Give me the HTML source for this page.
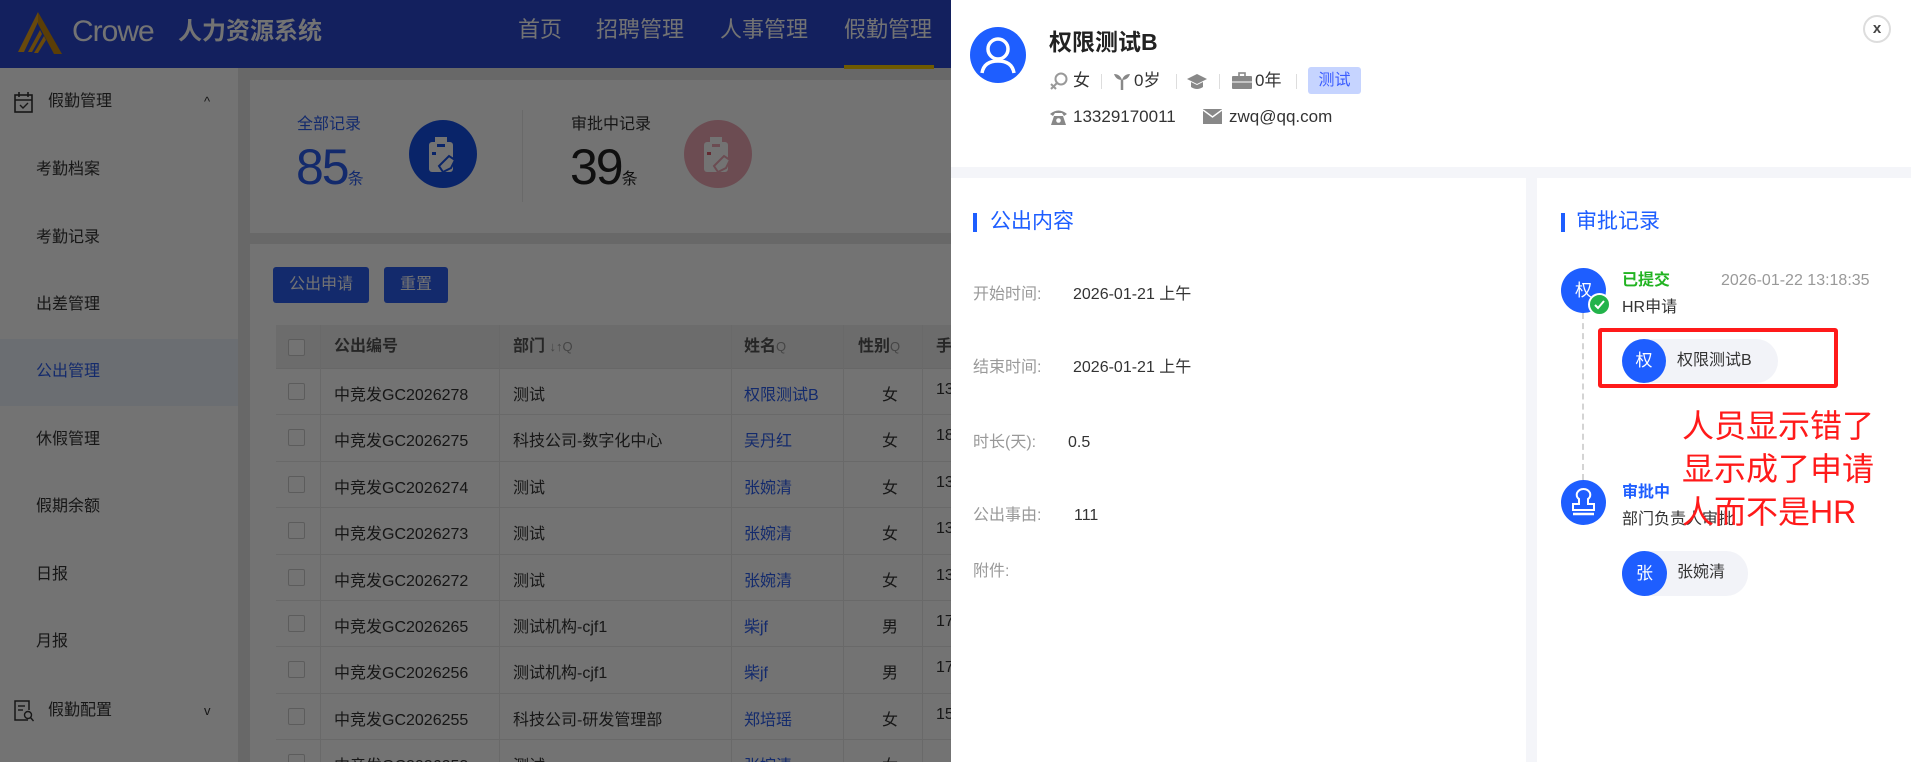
<!DOCTYPE html>
<html><head><meta charset="utf-8"><style>
*{margin:0;padding:0;box-sizing:border-box}
html,body{width:1911px;height:762px;overflow:hidden}
body{position:relative;background:#e6e6e6;font-family:"Liberation Sans","Noto Sans CJK SC",sans-serif;color:#333}
#wrap{position:absolute;left:0;top:0;width:1911px;height:762px;overflow:hidden}
.a{position:absolute;white-space:nowrap}
.c{position:absolute;white-space:nowrap;line-height:20px;transform:translateY(-50%)}
</style></head><body><div id="wrap">
<!-- header -->
<div class="a" style="left:0;top:0;width:1911px;height:68px;background:#2a48d0"></div>
<svg class="a" style="left:14px;top:12px" width="48" height="42" viewBox="0 0 48 42"><path d="M24 0 L4 40 L10 40 L24 10 Z" fill="#e8a21c"/><path d="M24 0 L48 42 L40 42 L24 12Z" fill="#c98a10"/><path d="M14 40 L26 18 L28 22 L18 40Z" fill="#e8a21c"/><path d="M20 41 L30 24 L32 28 L24 41Z" fill="#e8a21c"/></svg>
<div class="c" style="left:72px;top:32px;font-size:30px;color:#fff;line-height:34px;letter-spacing:-1px">Crowe</div>
<div class="c" style="left:178px;top:32px;font-size:24px;color:#fff;font-weight:bold;line-height:30px">人力资源系统</div>
<div class="c" style="left:518px;top:30px;font-size:22px;color:#fff;line-height:28px">首页</div>
<div class="c" style="left:596px;top:30px;font-size:22px;color:#fff;line-height:28px">招聘管理</div>
<div class="c" style="left:720px;top:30px;font-size:22px;color:#fff;line-height:28px">人事管理</div>
<div class="c" style="left:844px;top:30px;font-size:22px;color:#fff;line-height:28px">假勤管理</div>
<div class="a" style="left:844px;top:65px;width:90px;height:4px;background:#f5c800"></div>
<!-- sidebar -->
<div class="a" style="left:0;top:68px;width:238px;height:694px;background:#fff"></div>
<div class="a" style="left:0;top:339px;width:238px;height:67px;background:#eef3fc"></div>
<svg class="a" style="left:14px;top:92px" width="20" height="22" viewBox="0 0 20 22"><rect x="1" y="3" width="17" height="17" fill="none" stroke="#333" stroke-width="1.6"/><line x1="1" y1="8" x2="18" y2="8" stroke="#333" stroke-width="1.6"/><line x1="5" y1="0" x2="5" y2="5" stroke="#333" stroke-width="1.6"/><line x1="14" y1="0" x2="14" y2="5" stroke="#333" stroke-width="1.6"/><path d="M6 13 L9 16 L14 11" fill="none" stroke="#333" stroke-width="1.4"/></svg>
<div class="c" style="left:48px;top:102px;font-size:16px">假勤管理</div>
<div class="c" style="left:204px;top:102px;font-size:13px">^</div>
<div class="c" style="left:36px;top:170px;font-size:16px">考勤档案</div>
<div class="c" style="left:36px;top:238px;font-size:16px">考勤记录</div>
<div class="c" style="left:36px;top:305px;font-size:16px">出差管理</div>
<div class="c" style="left:36px;top:372px;font-size:16px;color:#2c5ef0">公出管理</div>
<div class="c" style="left:36px;top:440px;font-size:16px">休假管理</div>
<div class="c" style="left:36px;top:507px;font-size:16px">假期余额</div>
<div class="c" style="left:36px;top:575px;font-size:16px">日报</div>
<div class="c" style="left:36px;top:642px;font-size:16px">月报</div>
<svg class="a" style="left:14px;top:700px" width="20" height="22" viewBox="0 0 20 22"><path d="M14 20 H1 V1 H15 V10" fill="none" stroke="#333" stroke-width="1.5"/><line x1="4" y1="6" x2="11" y2="6" stroke="#333" stroke-width="1.4"/><line x1="4" y1="10" x2="9" y2="10" stroke="#333" stroke-width="1.4"/><circle cx="14" cy="15" r="3.5" fill="none" stroke="#333" stroke-width="1.4"/><line x1="16.5" y1="17.5" x2="19.5" y2="21" stroke="#333" stroke-width="1.4"/></svg>
<div class="c" style="left:48px;top:711px;font-size:16px">假勤配置</div>
<div class="c" style="left:204px;top:711px;font-size:13px">v</div>
<!-- stats card -->
<div class="a" style="left:250px;top:80px;width:701px;height:153px;background:#fff"></div>
<div class="c" style="left:297px;top:125px;font-size:16px;color:#2c5ef0">全部记录</div>
<div class="a" style="left:296px;top:142px;font-size:50px;line-height:50px;color:#2c5ef0;letter-spacing:-2px">85<span style="font-size:16px;letter-spacing:0">条</span></div>
<svg class="a" style="left:409px;top:120px" width="68" height="68" viewBox="0 0 68 68"><circle cx="34" cy="34" r="34" fill="#1550e8"/><rect x="20" y="22" width="24" height="30" rx="3" fill="#fff"/><rect x="26" y="17" width="12" height="6" fill="#fff"/><rect x="28" y="24" width="8" height="3" fill="#1550e8"/><rect x="23" y="32" width="4" height="3" fill="#1550e8"/><path d="M30 46 L40 36 L46 40 L42 48 L34 52Z" fill="#fff" stroke="#1550e8" stroke-width="2"/></svg>
<div class="a" style="left:522px;top:110px;width:1px;height:92px;background:#e8e8e8"></div>
<div class="c" style="left:571px;top:125px;font-size:16px;color:#333">审批中记录</div>
<div class="a" style="left:570px;top:142px;font-size:50px;line-height:50px;color:#222;letter-spacing:-2px">39<span style="font-size:16px;letter-spacing:0">条</span></div>
<svg class="a" style="left:684px;top:120px" width="68" height="68" viewBox="0 0 68 68"><circle cx="34" cy="34" r="34" fill="#f0a8b6"/><rect x="20" y="22" width="24" height="30" rx="3" fill="#fff"/><rect x="26" y="17" width="12" height="6" fill="#fff"/><rect x="28" y="24" width="8" height="3" fill="#f0a8b6"/><rect x="23" y="32" width="4" height="3" fill="#e06070"/><path d="M30 46 L40 36 L46 40 L42 48 L34 52Z" fill="#fff" stroke="#f0a8b6" stroke-width="2"/></svg>
<!-- table card -->
<div class="a" style="left:250px;top:244px;width:701px;height:518px;background:#fff"></div>
<div class="a" style="left:273px;top:267px;width:96px;height:36px;background:#2c5ef0;border-radius:3px;color:#fff;font-size:16px;line-height:36px;text-align:center">公出申请</div>
<div class="a" style="left:384px;top:267px;width:64px;height:36px;background:#2c5ef0;border-radius:3px;color:#fff;font-size:16px;line-height:36px;text-align:center">重置</div>
<div class="a" style="left:276px;top:325px;width:675px;height:44px;background:#f0f0f0;border-bottom:1px solid #e4e4e4"></div>
<div class="a" style="left:320px;top:325px;width:1px;height:437px;background:#e8e8e8"></div>
<div class="a" style="left:499px;top:325px;width:1px;height:437px;background:#e8e8e8"></div>
<div class="a" style="left:731px;top:325px;width:1px;height:437px;background:#e8e8e8"></div>
<div class="a" style="left:843px;top:325px;width:1px;height:437px;background:#e8e8e8"></div>
<div class="a" style="left:922px;top:325px;width:1px;height:437px;background:#e8e8e8"></div>
<div class="a" style="left:288px;top:339px;width:17px;height:17px;border:1px solid #ccc;background:#fff;border-radius:2px"></div>
<div class="c" style="left:334px;top:347px;font-size:16px;color:#555;font-weight:bold">公出编号</div>
<div class="c" style="left:513px;top:347px;font-size:16px;color:#555;font-weight:bold">部门 <span style="font-weight:normal;font-size:13px;color:#999">↓↑Q</span></div>
<div class="c" style="left:744px;top:347px;font-size:16px;color:#555;font-weight:bold">姓名<span style="font-weight:normal;font-size:13px;color:#999">Q</span></div>
<div class="c" style="left:858px;top:347px;font-size:16px;color:#555;font-weight:bold">性别<span style="font-weight:normal;font-size:13px;color:#999">Q</span></div>
<div class="c" style="left:936px;top:347px;font-size:16px;color:#555;font-weight:bold">手</div>

<div class="a" style="left:276px;top:369px;width:675px;height:393px;overflow:hidden">
<div style="position:relative;height:46.4px;border-bottom:1px solid #e8e8e8"><div class="a" style="left:12px;top:14px;width:17px;height:17px;border:1px solid #ccc;border-radius:2px"></div><span class="a" style="left:58px;top:12px;font-size:16px">中竞发GC2026278</span><span class="a" style="left:237px;top:12px;font-size:16px">测试</span><span class="a" style="left:468px;top:12px;font-size:16px;color:#2c5ef0">权限测试B</span><span class="a" style="left:606px;top:12px;font-size:16px">女</span><span class="a" style="left:660px;top:12px;font-size:16px">13</span></div>
<div style="position:relative;height:46.4px;border-bottom:1px solid #e8e8e8"><div class="a" style="left:12px;top:14px;width:17px;height:17px;border:1px solid #ccc;border-radius:2px"></div><span class="a" style="left:58px;top:12px;font-size:16px">中竞发GC2026275</span><span class="a" style="left:237px;top:12px;font-size:16px">科技公司-数字化中心</span><span class="a" style="left:468px;top:12px;font-size:16px;color:#2c5ef0">吴丹红</span><span class="a" style="left:606px;top:12px;font-size:16px">女</span><span class="a" style="left:660px;top:12px;font-size:16px">18</span></div>
<div style="position:relative;height:46.4px;border-bottom:1px solid #e8e8e8"><div class="a" style="left:12px;top:14px;width:17px;height:17px;border:1px solid #ccc;border-radius:2px"></div><span class="a" style="left:58px;top:12px;font-size:16px">中竞发GC2026274</span><span class="a" style="left:237px;top:12px;font-size:16px">测试</span><span class="a" style="left:468px;top:12px;font-size:16px;color:#2c5ef0">张婉清</span><span class="a" style="left:606px;top:12px;font-size:16px">女</span><span class="a" style="left:660px;top:12px;font-size:16px">13</span></div>
<div style="position:relative;height:46.4px;border-bottom:1px solid #e8e8e8"><div class="a" style="left:12px;top:14px;width:17px;height:17px;border:1px solid #ccc;border-radius:2px"></div><span class="a" style="left:58px;top:12px;font-size:16px">中竞发GC2026273</span><span class="a" style="left:237px;top:12px;font-size:16px">测试</span><span class="a" style="left:468px;top:12px;font-size:16px;color:#2c5ef0">张婉清</span><span class="a" style="left:606px;top:12px;font-size:16px">女</span><span class="a" style="left:660px;top:12px;font-size:16px">13</span></div>
<div style="position:relative;height:46.4px;border-bottom:1px solid #e8e8e8"><div class="a" style="left:12px;top:14px;width:17px;height:17px;border:1px solid #ccc;border-radius:2px"></div><span class="a" style="left:58px;top:12px;font-size:16px">中竞发GC2026272</span><span class="a" style="left:237px;top:12px;font-size:16px">测试</span><span class="a" style="left:468px;top:12px;font-size:16px;color:#2c5ef0">张婉清</span><span class="a" style="left:606px;top:12px;font-size:16px">女</span><span class="a" style="left:660px;top:12px;font-size:16px">13</span></div>
<div style="position:relative;height:46.4px;border-bottom:1px solid #e8e8e8"><div class="a" style="left:12px;top:14px;width:17px;height:17px;border:1px solid #ccc;border-radius:2px"></div><span class="a" style="left:58px;top:12px;font-size:16px">中竞发GC2026265</span><span class="a" style="left:237px;top:12px;font-size:16px">测试机构-cjf1</span><span class="a" style="left:468px;top:12px;font-size:16px;color:#2c5ef0">柴jf</span><span class="a" style="left:606px;top:12px;font-size:16px">男</span><span class="a" style="left:660px;top:12px;font-size:16px">17</span></div>
<div style="position:relative;height:46.4px;border-bottom:1px solid #e8e8e8"><div class="a" style="left:12px;top:14px;width:17px;height:17px;border:1px solid #ccc;border-radius:2px"></div><span class="a" style="left:58px;top:12px;font-size:16px">中竞发GC2026256</span><span class="a" style="left:237px;top:12px;font-size:16px">测试机构-cjf1</span><span class="a" style="left:468px;top:12px;font-size:16px;color:#2c5ef0">柴jf</span><span class="a" style="left:606px;top:12px;font-size:16px">男</span><span class="a" style="left:660px;top:12px;font-size:16px">17</span></div>
<div style="position:relative;height:46.4px;border-bottom:1px solid #e8e8e8"><div class="a" style="left:12px;top:14px;width:17px;height:17px;border:1px solid #ccc;border-radius:2px"></div><span class="a" style="left:58px;top:12px;font-size:16px">中竞发GC2026255</span><span class="a" style="left:237px;top:12px;font-size:16px">科技公司-研发管理部</span><span class="a" style="left:468px;top:12px;font-size:16px;color:#2c5ef0">郑培瑶</span><span class="a" style="left:606px;top:12px;font-size:16px">女</span><span class="a" style="left:660px;top:12px;font-size:16px">15</span></div>
<div style="position:relative;height:46.4px"><div class="a" style="left:12px;top:14px;width:17px;height:17px;border:1px solid #ccc;border-radius:2px"></div><span class="a" style="left:58px;top:12px;font-size:16px">中竞发GC2026253</span><span class="a" style="left:237px;top:12px;font-size:16px">测试</span><span class="a" style="left:468px;top:12px;font-size:16px;color:#2c5ef0">张婉清</span><span class="a" style="left:606px;top:12px;font-size:16px">女</span></div>
</div>
<!-- overlay -->
<div class="a" style="left:0;top:0;width:951px;height:762px;background:rgba(0,0,0,.55)"></div>

<!-- drawer -->
<div class="a" style="left:951px;top:0;width:960px;height:762px;background:#f4f5f9"></div>
<div class="a" style="left:951px;top:0;width:960px;height:167px;background:#fff"></div>
<div class="a" style="left:951px;top:178px;width:575px;height:584px;background:#fff"></div>
<div class="a" style="left:1537px;top:178px;width:374px;height:584px;background:#fff"></div>
<svg class="a" style="left:970px;top:27px" width="56" height="56" viewBox="0 0 56 56"><circle cx="28" cy="28" r="28" fill="#1e5eff"/><circle cx="28" cy="22" r="10" fill="none" stroke="#fff" stroke-width="3.5"/><path d="M12 46 Q14 34 28 34 Q42 34 44 46" fill="none" stroke="#fff" stroke-width="3.5"/></svg>
<div class="c" style="left:1049px;top:42px;font-size:23px;font-weight:bold;color:#222;line-height:28px">权限测试B</div>
<svg class="a" style="left:1049px;top:71px" width="20" height="20" viewBox="0 0 20 20"><circle cx="12" cy="8" r="5.5" fill="none" stroke="#999" stroke-width="2"/><line x1="8" y1="12" x2="2" y2="18" stroke="#999" stroke-width="2"/><line x1="2" y1="13" x2="7" y2="18" stroke="#999" stroke-width="2"/></svg>
<div class="c" style="left:1073px;top:81px;font-size:17px">女</div>
<div class="a" style="left:1101px;top:74px;width:1px;height:15px;background:#ddd"></div>
<svg class="a" style="left:1113px;top:72px" width="18" height="18" viewBox="0 0 18 18"><path d="M9 18 V8" stroke="#888" stroke-width="2.5"/><path d="M9 8 Q3 8 1 2 Q7 2 9 8 Q11 2 17 2 Q15 8 9 8Z" fill="#888"/></svg>
<div class="c" style="left:1134px;top:81px;font-size:17px">0岁</div>
<div class="a" style="left:1176px;top:74px;width:1px;height:15px;background:#ddd"></div>
<svg class="a" style="left:1187px;top:73px" width="20" height="17" viewBox="0 0 20 17"><path d="M0 6 L10 1 L20 6 L10 11Z" fill="#888"/><path d="M4 9 V14 Q10 18 16 14 V9 L10 12Z" fill="#888"/></svg>
<div class="a" style="left:1219px;top:74px;width:1px;height:15px;background:#ddd"></div>
<svg class="a" style="left:1232px;top:72px" width="20" height="18" viewBox="0 0 20 18"><rect x="0" y="4" width="20" height="13" rx="1" fill="#888"/><rect x="7" y="1" width="6" height="4" fill="none" stroke="#888" stroke-width="1.6"/><line x1="0" y1="10" x2="20" y2="10" stroke="#fff" stroke-width="1"/></svg>
<div class="c" style="left:1255px;top:81px;font-size:17px">0年</div>
<div class="a" style="left:1296px;top:74px;width:1px;height:15px;background:#ddd"></div>
<div class="a" style="left:1308px;top:67px;width:53px;height:27px;background:#c6d4ff;border-radius:3px;color:#3a5cff;font-size:16px;line-height:27px;text-align:center">测试</div>
<svg class="a" style="left:1049px;top:108px" width="19" height="18" viewBox="0 0 19 18"><path d="M1 6 Q9.5 -1 18 6 L15 8 L13 5 H6 L4 8Z" fill="#888"/><path d="M5 8 H14 L17 17 H2Z" fill="#888"/><circle cx="9.5" cy="12.5" r="2.3" fill="#fff"/></svg>
<div class="c" style="left:1073px;top:117px;font-size:17px">13329170011</div>
<svg class="a" style="left:1203px;top:109px" width="19" height="15" viewBox="0 0 19 15"><rect x="0" y="0" width="19" height="15" fill="#888"/><path d="M0 1 L9.5 8 L19 1" fill="none" stroke="#fff" stroke-width="1.5"/></svg>
<div class="c" style="left:1229px;top:117px;font-size:17px">zwq@qq.com</div>
<div class="a" style="left:1863px;top:15px;width:28px;height:28px;border:2px solid #ddd;border-radius:50%;text-align:center;line-height:23px;font-size:15px;font-weight:bold;color:#444">x</div>

<div class="a" style="left:973px;top:213px;width:4px;height:19px;background:#1e5eff"></div>
<div class="c" style="left:990px;top:222px;font-size:21px;color:#1e5eff;line-height:26px">公出内容</div>
<div class="c" style="left:973px;top:295px;font-size:16px;color:#999">开始时间:</div>
<div class="c" style="left:1073px;top:295px;font-size:16px;color:#333">2026-01-21 上午</div>
<div class="c" style="left:973px;top:368px;font-size:16px;color:#999">结束时间:</div>
<div class="c" style="left:1073px;top:368px;font-size:16px;color:#333">2026-01-21 上午</div>
<div class="c" style="left:973px;top:443px;font-size:16px;color:#999">时长(天):</div>
<div class="c" style="left:1068px;top:443px;font-size:16px;color:#333">0.5</div>
<div class="c" style="left:973px;top:516px;font-size:16px;color:#999">公出事由:</div>
<div class="c" style="left:1074px;top:516px;font-size:16px;color:#333">111</div>
<div class="c" style="left:973px;top:572px;font-size:16px;color:#999">附件:</div>

<div class="a" style="left:1561px;top:213px;width:4px;height:19px;background:#1e5eff"></div>
<div class="c" style="left:1576px;top:222px;font-size:21px;color:#1e5eff;line-height:26px">审批记录</div>
<div class="a" style="left:1582px;top:313px;width:0;height:167px;border-left:2px dashed #d4d4d4"></div>
<div class="a" style="left:1561px;top:268px;width:45px;height:45px;border-radius:50%;background:#1e5eff;color:#fff;font-size:17px;line-height:45px;text-align:center">权</div>
<svg class="a" style="left:1588px;top:293px" width="23" height="23" viewBox="0 0 23 23"><circle cx="11.5" cy="11.5" r="10.5" fill="#22b34a" stroke="#fff" stroke-width="2"/><path d="M7 12 L10 15 L16 8" fill="none" stroke="#fff" stroke-width="2"/></svg>
<div class="c" style="left:1622px;top:281px;font-size:16px;font-weight:bold;color:#22b322">已提交</div>
<div class="c" style="left:1721px;top:281px;font-size:16px;color:#999">2026-01-22 13:18:35</div>
<div class="c" style="left:1622px;top:308px;font-size:16px;color:#333">HR申请</div>
<div class="a" style="left:1622px;top:339px;width:156px;height:44px;border-radius:22px;background:#f2f3f8"></div>
<div class="a" style="left:1622px;top:339px;width:44px;height:44px;border-radius:50%;background:#1e5eff;color:#fff;font-size:17px;line-height:44px;text-align:center">权</div>
<div class="c" style="left:1677px;top:361px;font-size:16px;color:#333">权限测试B</div>
<div class="a" style="left:1598px;top:328px;width:240px;height:60px;border:4px solid #ff1a1a;border-radius:3px"></div>
<svg class="a" style="left:1561px;top:480px" width="45" height="45" viewBox="0 0 45 45"><circle cx="22.5" cy="22.5" r="22.5" fill="#1e5eff"/><path d="M18 24 V19 Q15 17 16 13 Q18 9 22.5 9 Q27 9 29 13 Q30 17 27 19 V24 H33 V30 H12 V24Z" fill="none" stroke="#fff" stroke-width="2"/><line x1="12" y1="34" x2="33" y2="34" stroke="#fff" stroke-width="2.5"/></svg>
<div class="c" style="left:1622px;top:493px;font-size:16px;font-weight:bold;color:#1e5eff">审批中</div>
<div class="c" style="left:1622px;top:520px;font-size:16px;color:#333">部门负责人审批</div>
<div class="a" style="left:1622px;top:551px;width:126px;height:45px;border-radius:22px;background:#f2f3f8"></div>
<div class="a" style="left:1622px;top:551px;width:45px;height:45px;border-radius:50%;background:#1e5eff;color:#fff;font-size:17px;line-height:45px;text-align:center">张</div>
<div class="c" style="left:1677px;top:573px;font-size:16px;color:#333">张婉清</div>
<div class="a" style="left:1682px;top:405px;font-size:32px;line-height:43px;color:#ff1a1a;white-space:normal">人员显示错了<br>显示成了申请<br>人而不是HR</div>
</div></body></html>
